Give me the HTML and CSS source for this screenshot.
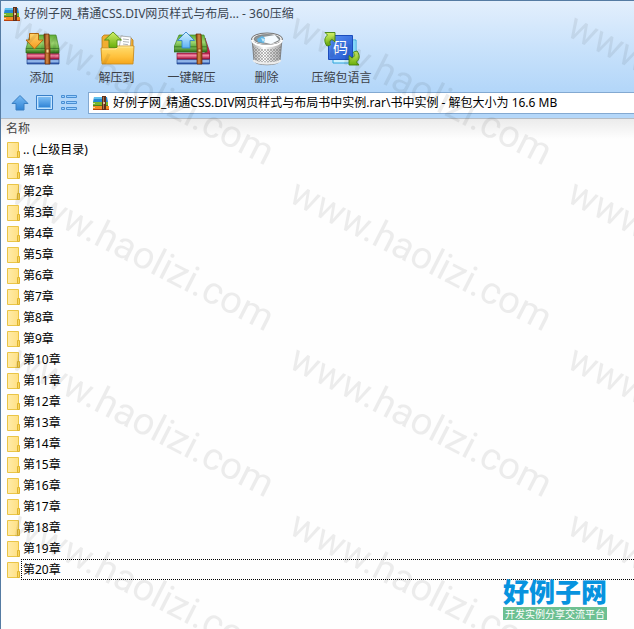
FILE: index.html
```html
<!DOCTYPE html>
<html lang="zh-CN">
<head>
<meta charset="utf-8">
<meta name="viewport" content="width=device-width, initial-scale=1">
<title>好例子网_精通CSS.DIV网页样式与布局... - 360压缩</title>
<link rel="stylesheet" href="styles.css">
</head>
<body>
<svg class="defs" aria-hidden="true">
  <defs>
    <linearGradient id="green" x1="0" y1="0" x2="0" y2="1"><stop offset="0" stop-color="#5fae35"/><stop offset=".6" stop-color="#9dd570"/><stop offset="1" stop-color="#61ac3c"/></linearGradient>
    <linearGradient id="spine" x1="0" y1="0" x2="0" y2="1"><stop offset="0" stop-color="#83c35c"/><stop offset="1" stop-color="#2c6d16"/></linearGradient>
    <linearGradient id="red" x1="0" y1="0" x2="0" y2="1"><stop offset="0" stop-color="#b31c4b"/><stop offset=".4" stop-color="#f48aa5"/><stop offset="1" stop-color="#a40f3c"/></linearGradient>
    <linearGradient id="blue" x1="0" y1="0" x2="0" y2="1"><stop offset="0" stop-color="#2c57ac"/><stop offset=".4" stop-color="#a8cbf7"/><stop offset="1" stop-color="#1b439d"/></linearGradient>
    <linearGradient id="belt"><stop offset="0" stop-color="#7b3508"/><stop offset=".5" stop-color="#d98b45"/><stop offset="1" stop-color="#843b0b"/></linearGradient>
    <linearGradient id="orange" x1="0" y1="0" x2="0" y2="1"><stop offset="0" stop-color="#ffd46b"/><stop offset="1" stop-color="#f59a1e"/></linearGradient>
    <linearGradient id="folder" x1="0" y1="0" x2="0" y2="1"><stop offset="0" stop-color="#ffdd70"/><stop offset=".6" stop-color="#ffc13c"/><stop offset="1" stop-color="#f5a61c"/></linearGradient>
    <linearGradient id="lime" x1="0" y1="0" x2="0" y2="1"><stop offset="0" stop-color="#d3f06a"/><stop offset="1" stop-color="#69ae0b"/></linearGradient>
    <linearGradient id="sky" x1="0" y1="0" x2="0" y2="1"><stop offset="0" stop-color="#d8f2ff"/><stop offset="1" stop-color="#5cb2f6"/></linearGradient>
    <linearGradient id="tile" x1="0" y1="0" x2="1" y2="1"><stop offset="0" stop-color="#5a90f4"/><stop offset="1" stop-color="#2258cf"/></linearGradient>
    <linearGradient id="nav" x1="0" y1="0" x2="0" y2="1"><stop offset="0" stop-color="#79bbf4"/><stop offset="1" stop-color="#2f83d5"/></linearGradient>
    <linearGradient id="metal"><stop offset="0" stop-color="#a9a9a9"/><stop offset=".4" stop-color="#fff"/><stop offset="1" stop-color="#a4a4a4"/></linearGradient>
    <linearGradient id="page"><stop offset="0" stop-color="#ffecaa"/><stop offset="1" stop-color="#ffe083"/></linearGradient>
    <pattern id="mesh" width="3" height="3" patternUnits="userSpaceOnUse"><circle cx="1" cy="1" r=".75" fill="#606060"/><circle cx="2.5" cy="2.5" r=".5" fill="#888"/></pattern>
    <pattern id="stamp" x="4" y="10" width="278" height="166" patternUnits="userSpaceOnUse">
      <text class="stamp-text" transform="translate(4 24) rotate(27)">www.haolizi.com</text>
    </pattern>
    <symbol id="archive" viewBox="0 0 16 14" preserveAspectRatio="none">
      <path fill="#2689d2" d="M1 1h13l1 5H0z"/><path fill="#60c0ed" d="M1 1h12v2H1z"/>
      <path fill="#79b82d" d="M0 6h15v4H0z"/><path fill="#4c8321" d="M0 9h15v1H0z"/>
      <path fill="#f28b20" d="M0 10h16v4H0z"/><path fill="#b9420e" d="M0 13h16v1H0z"/>
      <path fill="#fff" opacity=".6" d="M0 7h2v1H0zM0 11h2v1H0z"/>
      <path fill="#603019" d="M9 0h4v14H9z"/><path fill="#ad7652" d="M10 1h1v12h-1z"/><path fill="#e3c19d" d="M10 6h2v2h-2z"/>
    </symbol>
    <symbol id="dir" viewBox="0 0 14 16">
      <path fill="url(#page)" stroke="#eac546" d="M.5.5h11v15H.5z"/>
      <path fill="#f9d663" stroke="#dfb52f" d="M10.500 9.500h2v6h-2z"/>
    </symbol>
  </defs>
</svg>

<main class="window">
  <header class="chrome">
    <div class="titlebar">
      <svg class="app-icon" aria-hidden="true"><use href="#archive"/></svg>
      <h1 class="title">好例子网_精通CSS.DIV网页样式与布局... - 360压缩</h1>
    </div>

    <div class="toolbar">
      <button class="tool" type="button">
        <svg class="tool-icon" viewBox="0 0 36 36" aria-hidden="true">
          <path fill="url(#blue)" stroke="#20458f" stroke-width=".7" d="M3 28h32v5H3z"/>
          <path fill="url(#red)" stroke="#8e1538" stroke-width=".7" d="M3 22.500h32V28H3z"/>
          <path fill="url(#green)" stroke="#438426" stroke-width=".7" d="M6 4h26l3 13.500H2z"/>
          <path fill="url(#spine)" stroke="#326f1d" stroke-width=".7" d="M2 17.500h33V22H2z"/>
          <path fill="url(#belt)" stroke="#6b2f0a" stroke-width=".7" d="M20 3h5l1 15v15h-5V18z"/>
          <path fill="#f7d18e" stroke="#7b3b0c" stroke-width=".7" d="M22 18h3v4h-3z"/>
          <path fill="url(#orange)" stroke="#b66a11" d="M5.500 2.500h9V9h4.500l-8.500 9L2 9h3.500z"/>
        </svg>
        <span>添加</span>
      </button>
      <button class="tool" type="button">
        <svg class="tool-icon" viewBox="0 0 36 36" aria-hidden="true">
          <path fill="#f1ad31" stroke="#b77c18" stroke-width=".8" d="M3 30V6l2-2h8l2 3h17l2 2v21z"/>
          <path fill="#f8fbfd" stroke="#a6a9a8" stroke-width=".7" d="M11 5h13l1 14H10z"/>
          <path fill="#fff" stroke="#909596" stroke-width=".7" d="m22 5 10 1-1 14-11-2z"/>
          <path stroke="#b2b7ba" d="m24 8 6 .7m-6 1.800 6 .7m-6 1.800 5 .7"/>
          <path fill="url(#folder)" stroke="#c58a20" stroke-width=".8" d="M2 17h14l2-2h17l-1 18H3z"/>
          <path fill="none" stroke="#fff0a8" stroke-width=".8" d="M3 18h14l2-2h15"/>
          <path fill="url(#lime)" stroke="#538d12" stroke-width=".9" d="m14 1 8.500 8H18v7.500h-8V9H5.500z"/>
        </svg>
        <span>解压到</span>
      </button>
      <button class="tool" type="button">
        <svg class="tool-icon" viewBox="0 0 36 36" aria-hidden="true">
          <path fill="#cf204f" stroke="#991c3c" stroke-width=".7" d="m31 7 5 15v6h-5z"/>
          <path fill="url(#blue)" stroke="#20458f" stroke-width=".7" d="M3 28h32.500v5H3z"/>
          <path fill="url(#red)" stroke="#8e1538" stroke-width=".7" d="M3 22h32.500v6H3z"/>
          <path fill="url(#green)" stroke="#438426" stroke-width=".7" d="M5 4h25l3 12H0z"/>
          <path fill="url(#spine)" stroke="#326f1d" stroke-width=".7" d="M0 16h33v5H0z"/>
          <path fill="url(#belt)" stroke="#6b2f0a" stroke-width=".7" d="M22 3h5l1 14v16h-5V17z"/>
          <path fill="#f7d18e" stroke="#7b3b0c" stroke-width=".7" d="M24 18h3v3h-3z"/>
          <path fill="url(#sky)" stroke="#3486ca" stroke-width=".9" d="m12 1 8.500 8.500H16V17H8V9.500H3.500z"/>
        </svg>
        <span>一键解压</span>
      </button>
      <button class="tool" type="button">
        <svg class="tool-icon" viewBox="0 0 36 36" aria-hidden="true">
          <path fill="url(#metal)" stroke="#737373" stroke-width=".8" d="m3 8 2 22c2 5 24 5 26 0L33 8z"/>
          <path fill="url(#mesh)" d="m4 15 1 14c3 4 23 4 26 0l1-14c-5 4-23 4-28 0z"/>
          <path fill="none" stroke="#ededed" stroke-width="2" d="M4.500 29c2 4.500 25 4.500 27 0"/>
          <ellipse cx="18" cy="8" rx="15.500" ry="6" fill="#f5f5f5" stroke="#717171"/>
          <ellipse cx="18" cy="8" rx="13" ry="4.500" fill="#8d9598" stroke="#666" stroke-width=".6"/>
          <path fill="#f5fbff" d="m14 6 12-2 4 5-8 4-9-2z"/><path fill="#60b5e4" d="m8 8 5-3 3 2-1 5-6-1z"/><path fill="#c7e9f8" d="m12 7 4 1-2 3z"/>
          <path fill="none" stroke="#fff" stroke-width="2" d="M3 9c1 8 29 8 30 0"/>
        </svg>
        <span>删除</span>
      </button>
      <button class="tool" type="button">
        <svg class="tool-icon" viewBox="0 0 36 36" aria-hidden="true">
          <path fill="#cef1ff" stroke="#2aa4dc" d="M9 9h23v23H9z"/>
          <path fill="#82d8fa" d="M28 10h3v20h-3z"/>
          <path fill="url(#tile)" stroke="#1c4dbc" d="M4.500 4.500h24v24h-24z"/>
          <text class="tile-text" x="16.500" y="22">码</text>
          <path fill="url(#lime)" stroke="#45840d" stroke-width=".9" d="M3 15C0 11 0 7 3.500 4L1 1.500h10V11L8 8.500C5 10 6 12 6.500 14z"/>
          <path fill="url(#lime)" stroke="#45840d" stroke-width=".9" d="M33 20c3 4 3 8-.5 11l2.500 3H25v-9.500l3 2.500c3-1.500 2-4 1.500-6z"/>
        </svg>
        <span>压缩包语言</span>
      </button>
    </div>

    <div class="location">
      <nav class="nav" aria-label="导航">
        <button class="nav-button" type="button" aria-label="向上">
          <svg viewBox="0 0 18 18"><path fill="url(#nav)" stroke="#3a7fc2" d="m9 1.500 8 8h-4V16H5V9.500H1z"/></svg>
        </button>
        <button class="nav-button" type="button" aria-label="图标">
          <svg viewBox="0 0 18 18"><path fill="#c5e4ff" stroke="#397fc7" d="M.5 1.500h16v14H.5z"/><path fill="url(#nav)" stroke="#7ab9ee" d="M2.500 3.500h12v10h-12z"/></svg>
        </button>
        <button class="nav-button" type="button" aria-label="列表">
          <svg viewBox="0 0 18 18"><path fill="#9bd0ff" stroke="#4a8fd3" d="M.5 1.500h3v2h-3zm5 0h10v2h-10zm-5 6h3v2h-3zm5 0h10v2h-10zm-5 6h3v2h-3zm5 0h10v2h-10z"/></svg>
        </button>
      </nav>
      <label class="address">
        <svg class="app-icon" aria-hidden="true"><use href="#archive"/></svg>
        <input class="path" type="text" aria-label="路径" value="好例子网_精通CSS.DIV网页样式与布局书中实例.rar\书中实例 - 解包大小为 16.6 MB">
      </label>
    </div>
  </header>

  <table class="files">
    <thead><tr><th scope="col">名称</th></tr></thead>
    <tbody>
      <tr><td><div class="file"><svg class="dir"><use href="#dir"/></svg><span class="name">.. (上级目录)</span></div></td></tr>
      <tr><td><div class="file"><svg class="dir"><use href="#dir"/></svg><span class="name">第1章</span></div></td></tr>
      <tr><td><div class="file"><svg class="dir"><use href="#dir"/></svg><span class="name">第2章</span></div></td></tr>
      <tr><td><div class="file"><svg class="dir"><use href="#dir"/></svg><span class="name">第3章</span></div></td></tr>
      <tr><td><div class="file"><svg class="dir"><use href="#dir"/></svg><span class="name">第4章</span></div></td></tr>
      <tr><td><div class="file"><svg class="dir"><use href="#dir"/></svg><span class="name">第5章</span></div></td></tr>
      <tr><td><div class="file"><svg class="dir"><use href="#dir"/></svg><span class="name">第6章</span></div></td></tr>
      <tr><td><div class="file"><svg class="dir"><use href="#dir"/></svg><span class="name">第7章</span></div></td></tr>
      <tr><td><div class="file"><svg class="dir"><use href="#dir"/></svg><span class="name">第8章</span></div></td></tr>
      <tr><td><div class="file"><svg class="dir"><use href="#dir"/></svg><span class="name">第9章</span></div></td></tr>
      <tr><td><div class="file"><svg class="dir"><use href="#dir"/></svg><span class="name">第10章</span></div></td></tr>
      <tr><td><div class="file"><svg class="dir"><use href="#dir"/></svg><span class="name">第11章</span></div></td></tr>
      <tr><td><div class="file"><svg class="dir"><use href="#dir"/></svg><span class="name">第12章</span></div></td></tr>
      <tr><td><div class="file"><svg class="dir"><use href="#dir"/></svg><span class="name">第13章</span></div></td></tr>
      <tr><td><div class="file"><svg class="dir"><use href="#dir"/></svg><span class="name">第14章</span></div></td></tr>
      <tr><td><div class="file"><svg class="dir"><use href="#dir"/></svg><span class="name">第15章</span></div></td></tr>
      <tr><td><div class="file"><svg class="dir"><use href="#dir"/></svg><span class="name">第16章</span></div></td></tr>
      <tr><td><div class="file"><svg class="dir"><use href="#dir"/></svg><span class="name">第17章</span></div></td></tr>
      <tr><td><div class="file"><svg class="dir"><use href="#dir"/></svg><span class="name">第18章</span></div></td></tr>
      <tr><td><div class="file"><svg class="dir"><use href="#dir"/></svg><span class="name">第19章</span></div></td></tr>
      <tr><td><div class="file"><svg class="dir"><use href="#dir"/></svg><span class="name focused">第20章</span></div></td></tr>
    </tbody>
  </table>

  <svg class="watermark" aria-hidden="true"><rect width="100%" height="100%" fill="url(#stamp)"/></svg>
  <div class="brand">
    <strong class="brand-name">好例子网</strong>
    <span class="brand-tag">开发实例分享交流平台</span>
  </div>
</main>
</body>
</html>
```
FILE: styles.css
```css
* {
  box-sizing: border-box;
}

body {
  margin: 0;
  font: 12px/20px "Noto Sans", "Noto Sans CJK SC", sans-serif;
  color: #000;
  background: #fefefe;
}

button,
input {
  font: inherit;
  color: inherit;
  border: 0;
  padding: 0;
  background: none;
}

.defs {
  position: absolute;
  width: 0;
  height: 0;
}

.window {
  position: relative;
  min-height: 100vh;
  overflow: hidden;
  border-top: 1px solid #557ba3;
  border-left: 1px solid #557ba3;
}

.chrome {
  background: linear-gradient(#e3effd, #c9e2fb 40%, #b4d7f9 75%, #b4d7f9);
  border-bottom: 1px solid #b5bcc4;
}

.titlebar {
  display: flex;
  align-items: center;
  gap: 4px;
  height: 26px;
  padding-left: 3px;
}

.app-icon {
  flex: none;
  width: 16px;
  height: 14px;
}

.title {
  margin: 0;
  font-size: 12px;
  font-weight: 400;
  color: #3b4652;
  white-space: nowrap;
}

.toolbar {
  display: flex;
  padding: 4px 3px 0;
}

.tool {
  display: flex;
  flex-direction: column;
  align-items: center;
  gap: 1px;
  width: 75px;
  color: #3c4148;
  white-space: nowrap;
}

.tool-icon {
  width: 36px;
  height: 36px;
}

.location {
  display: flex;
  align-items: center;
  gap: 9px;
  padding: 4px 0 4px 10px;
}

.nav {
  display: flex;
  gap: 7px;
}

.nav-button,
.nav-button svg {
  display: block;
  width: 18px;
  height: 18px;
}

.address {
  display: flex;
  flex: 1;
  align-items: center;
  gap: 4px;
  height: 22px;
  padding-left: 4px;
  border: 1px solid #83a9d1;
  border-right: 0;
  background: #fff;
}

.path {
  flex: 1;
  min-width: 0;
  height: 20px;
}

.files {
  width: 100%;
  border-collapse: collapse;
}

.files th {
  height: 20px;
  padding: 0 0 0 5px;
  font-weight: 400;
  text-align: left;
  color: #444;
  background: linear-gradient(#ebebeb, #fefefe);
}

.files td {
  padding: 0;
}

.file {
  display: flex;
  align-items: center;
  height: 21px;
  padding-left: 6px;
}

.dir {
  flex: none;
  width: 14px;
  height: 16px;
}

.name {
  flex: 1;
  height: 21px;
  padding-left: 1px;
  border: 1px solid transparent;
  border-right: 0;
}

.focused {
  border-color: #000;
  border-style: dotted;
}

.watermark {
  position: absolute;
  inset: 0;
  width: 100%;
  height: 100%;
  pointer-events: none;
}

.stamp-text {
  font: 38px Roboto, sans-serif;
  fill: #000;
  fill-opacity: .07;
}

.tile-text {
  font: 15px "Noto Sans CJK SC", sans-serif;
  fill: #fff;
  text-anchor: middle;
}

.brand {
  position: absolute;
  right: 27px;
  bottom: 9px;
  display: flex;
  flex-direction: column;
}

.brand-name {
  font: 900 26px/32px "Noto Sans CJK SC", sans-serif;
  color: #0793df;
}

.brand-tag {
  padding: 0 2px;
  font: 10px/13px "Noto Sans CJK SC", sans-serif;
  text-align: center;
  color: #fff;
  background: #6dc092;
}
```
